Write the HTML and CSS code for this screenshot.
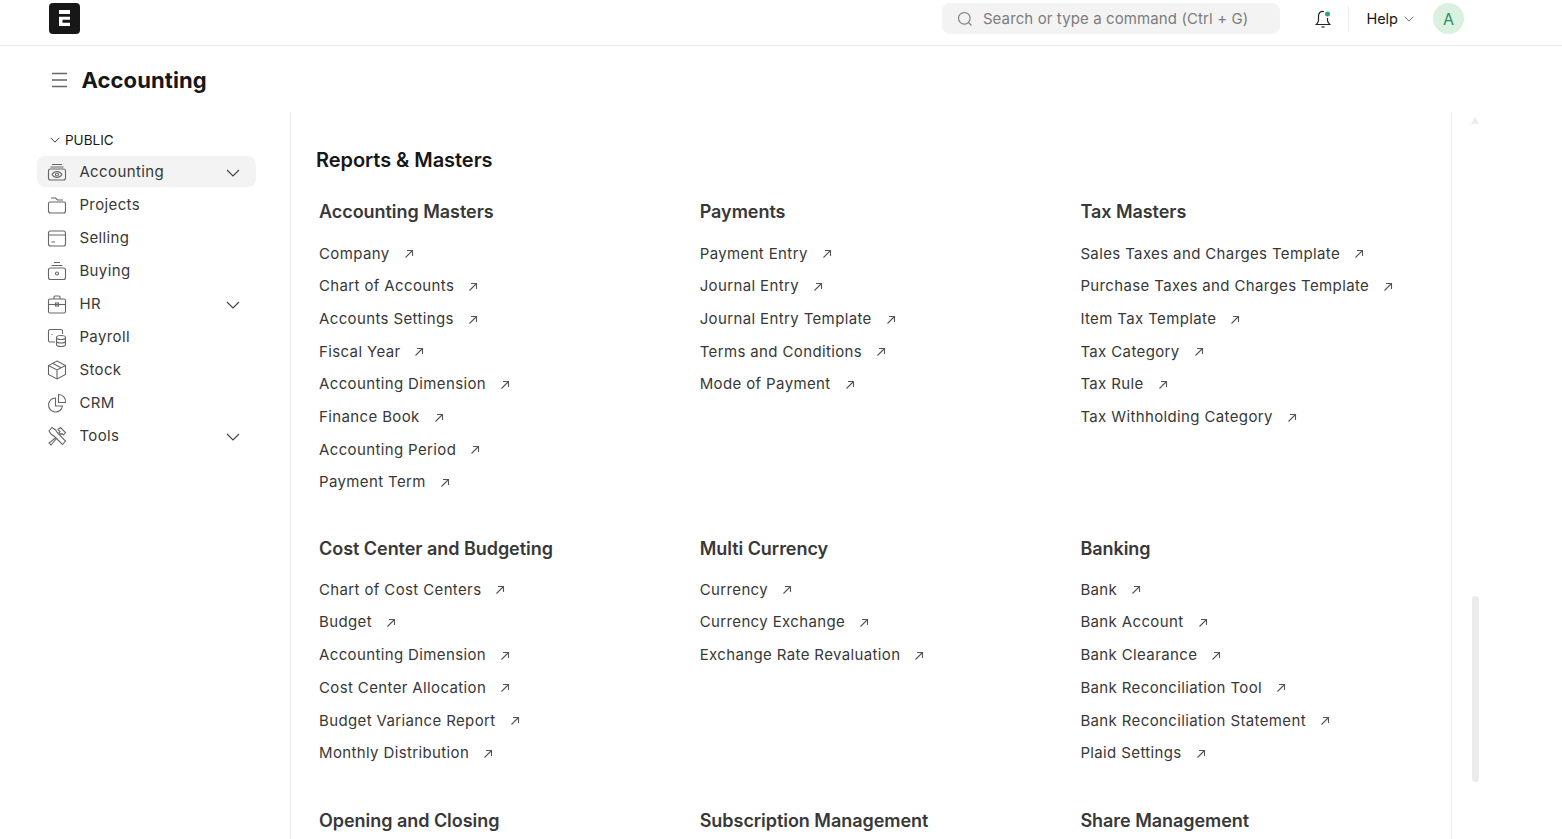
FILE: index.html
```html
<!DOCTYPE html>
<html lang="en">
<head>
  <meta charset="UTF-8" />
  <title>Accounting</title>
  <link rel="stylesheet" href="styles.css">
</head>
<body>
  <svg class="sprite" xmlns="http://www.w3.org/2000/svg" width="0" height="0">
    <symbol id="chev" viewBox="0 0 14 8"><path d="M1 1l6 6 6-6" fill="none" stroke="currentColor" stroke-width="1.2"/></symbol>
    <symbol id="arrow" viewBox="0 0 10 10"><path d="M1.5 8.5L8.5 1.5M3 1.5h5.5V7" fill="none" stroke="currentColor" stroke-width="1.1"/></symbol>
  </svg>

  <header class="navbar">
    <div class="logo">
      <svg width="31" height="31" viewBox="0 0 31 31" fill="#fff"><rect x="10" y="7" width="11" height="4"/><path d="M10 13.700h11v3h-7.500v3H21V23H10z"/></svg>
    </div>
    <div class="nav-right">
      <div class="search">
        <svg width="16" height="16" viewBox="0 0 16 16" fill="none" stroke="#7c7c7c" stroke-width="1.1"><circle cx="7.300" cy="7.300" r="5.800"/><path d="M11.500 11.500l3 3"/></svg>
        <span>Search or type a command (Ctrl + G)</span>
      </div>
      <div class="bell">
        <svg width="16" height="20" viewBox="0 0 16 20" fill="none" stroke="#222" stroke-width="1.2"><path d="M9 2.800C5.800 1.500 3.500 3.800 3.500 7v4.500c0 1.800-1.300 2.800-2.300 4h13.600c-1-1.200-2.300-2.200-2.300-4V9"/><path d="M6.500 18h3"/><circle cx="12.500" cy="5" r="2.500" fill="#30a66d" stroke="none"/></svg>
      </div>
      <div class="nav-sep"></div>
      <div class="help">Help <svg width="10" height="6"><use href="#chev"/></svg></div>
      <div class="avatar">A</div>
    </div>
  </header>

  <div class="page-head">
    <svg width="17" height="16" viewBox="0 0 17 16" stroke="#666" stroke-width="1.3"><path d="M1 1.500h15M1 8h15M1 14.500h15"/></svg>
    <h1>Accounting</h1>
  </div>

  <div class="layout">
    <aside class="sidebar">
      <div class="side-label"><svg width="10" height="6"><use href="#chev"/></svg> PUBLIC</div>
      <nav>
        <div class="side-item active">
          <svg class="side-icon" viewBox="0 0 20 20"><path d="M5 2.500h10M3.500 5h13"/><rect x="1.500" y="7" width="17" height="11" rx="2"/><path d="M5 12.500c1.500-2.300 3-3 5-3s3.500.7 5 3c-1.500 2.300-3 3-5 3s-3.500-.7-5-3z"/><circle cx="10" cy="12.500" r="1.500"/></svg>
          <span>Accounting</span>
          <svg class="side-chev"><use href="#chev"/></svg>
        </div>
        <div class="side-item">
          <svg class="side-icon" viewBox="0 0 20 20"><path d="M4 3h4.500l2 2H16M1.500 8.500A1.500 1.500 0 0 1 3 7h14a1.500 1.500 0 0 1 1.500 1.500V16a2 2 0 0 1-2 2h-13a2 2 0 0 1-2-2z"/></svg>
          <span>Projects</span>
        </div>
        <div class="side-item">
          <svg class="side-icon" viewBox="0 0 20 20"><rect x="1.500" y="3" width="17" height="15" rx="2"/><path d="M1.500 7h17M4.500 14h3.500"/></svg>
          <span>Selling</span>
        </div>
        <div class="side-item">
          <svg class="side-icon" viewBox="0 0 20 20"><path d="M7 1.500h6M4.500 4.500h11"/><rect x="1.500" y="7" width="17" height="11.500" rx="2"/><circle cx="10" cy="12.500" r="1.500"/></svg>
          <span>Buying</span>
        </div>
        <div class="side-item">
          <svg class="side-icon" viewBox="0 0 20 20"><path d="M7 5V3a1 1 0 0 1 1-1h4a1 1 0 0 1 1 1v2"/><rect x="1.500" y="5" width="17" height="14" rx="1.500"/><path d="M1.500 10.500h17"/><rect x="8.500" y="9" width="3" height="3"/></svg>
          <span>HR</span>
          <svg class="side-chev"><use href="#chev"/></svg>
        </div>
        <div class="side-item">
          <svg class="side-icon" viewBox="0 0 20 20"><path d="M8 15H3a1.500 1.500 0 0 1-1.500-1.500V4A1.500 1.500 0 0 1 3 2.500h11A1.500 1.500 0 0 1 15.500 4v3"/><path d="M5 7v1"/><ellipse cx="14" cy="10.500" rx="4.500" ry="2"/><path d="M9.500 10.500v7c0 1.100 2 2 4.500 2s4.500-.9 4.500-2v-7M9.500 14c0 1.100 2 2 4.500 2s4.500-.9 4.500-2"/></svg>
          <span>Payroll</span>
        </div>
        <div class="side-item">
          <svg class="side-icon" viewBox="0 0 20 20"><path d="M10 1l8.500 4.500v9L10 19l-8.500-4.500v-9z"/><path d="M1.500 5.500L10 10l8.500-4.500M10 10v9M5.500 3.200l8.500 4.500"/></svg>
          <span>Stock</span>
        </div>
        <div class="side-item">
          <svg class="side-icon" viewBox="0 0 20 20"><path d="M8.500 5a7 7 0 1 0 7 8h-7z"/><path d="M11.500 1.500a7 7 0 0 1 7 8h-7z"/></svg>
          <span>CRM</span>
        </div>
        <div class="side-item">
          <svg class="side-icon" viewBox="0 0 20 20"><path d="M2 5l3-3.500 3.500 2.500 2 3 8 8-3 3.500-8-8-3-2z"/><path d="M11 3.500l2.500-2 5 5-2 2.500-1.500-1.500-1 1-2-2 1-1zM9 11.500l-7 5.500 2 2 6-7"/></svg>
          <span>Tools</span>
          <svg class="side-chev"><use href="#chev"/></svg>
        </div>
      </nav>
    </aside>

    <main class="main">
      <h2>Reports &amp; Masters</h2>
      <div class="cards">
        <section class="card tall">
          <h3>Accounting Masters</h3>
          <a>Company <svg><use href="#arrow"/></svg></a>
          <a>Chart of Accounts <svg><use href="#arrow"/></svg></a>
          <a>Accounts Settings <svg><use href="#arrow"/></svg></a>
          <a>Fiscal Year <svg><use href="#arrow"/></svg></a>
          <a>Accounting Dimension <svg><use href="#arrow"/></svg></a>
          <a>Finance Book <svg><use href="#arrow"/></svg></a>
          <a>Accounting Period <svg><use href="#arrow"/></svg></a>
          <a>Payment Term <svg><use href="#arrow"/></svg></a>
        </section>
        <section class="card tall">
          <h3>Payments</h3>
          <a>Payment Entry <svg><use href="#arrow"/></svg></a>
          <a>Journal Entry <svg><use href="#arrow"/></svg></a>
          <a>Journal Entry Template <svg><use href="#arrow"/></svg></a>
          <a>Terms and Conditions <svg><use href="#arrow"/></svg></a>
          <a>Mode of Payment <svg><use href="#arrow"/></svg></a>
        </section>
        <section class="card tall">
          <h3>Tax Masters</h3>
          <a>Sales Taxes and Charges Template <svg><use href="#arrow"/></svg></a>
          <a>Purchase Taxes and Charges Template <svg><use href="#arrow"/></svg></a>
          <a>Item Tax Template <svg><use href="#arrow"/></svg></a>
          <a>Tax Category <svg><use href="#arrow"/></svg></a>
          <a>Tax Rule <svg><use href="#arrow"/></svg></a>
          <a>Tax Withholding Category <svg><use href="#arrow"/></svg></a>
        </section>
        <section class="card">
          <h3>Cost Center and Budgeting</h3>
          <a>Chart of Cost Centers <svg><use href="#arrow"/></svg></a>
          <a>Budget <svg><use href="#arrow"/></svg></a>
          <a>Accounting Dimension <svg><use href="#arrow"/></svg></a>
          <a>Cost Center Allocation <svg><use href="#arrow"/></svg></a>
          <a>Budget Variance Report <svg><use href="#arrow"/></svg></a>
          <a>Monthly Distribution <svg><use href="#arrow"/></svg></a>
        </section>
        <section class="card">
          <h3>Multi Currency</h3>
          <a>Currency <svg><use href="#arrow"/></svg></a>
          <a>Currency Exchange <svg><use href="#arrow"/></svg></a>
          <a>Exchange Rate Revaluation <svg><use href="#arrow"/></svg></a>
        </section>
        <section class="card">
          <h3>Banking</h3>
          <a>Bank <svg><use href="#arrow"/></svg></a>
          <a>Bank Account <svg><use href="#arrow"/></svg></a>
          <a>Bank Clearance <svg><use href="#arrow"/></svg></a>
          <a>Bank Reconciliation Tool <svg><use href="#arrow"/></svg></a>
          <a>Bank Reconciliation Statement <svg><use href="#arrow"/></svg></a>
          <a>Plaid Settings <svg><use href="#arrow"/></svg></a>
        </section>
        <section class="card"><h3>Opening and Closing</h3></section>
        <section class="card"><h3>Subscription Management</h3></section>
        <section class="card"><h3>Share Management</h3></section>
      </div>
    </main>

    <div class="scroll">
      <div class="scroll-up"></div>
      <div class="scroll-thumb"></div>
    </div>
  </div>
</body>
</html>
```

FILE: styles.css
```css
* {
  margin: 0;
  padding: 0;
  box-sizing: border-box;
}
html, body {
  height: 100%;
  overflow: hidden;
}
body {
  background-color: #ffffff;
  color: #383838;
  font-family: Inter, 'Noto Sans', sans-serif;
  font-size: 15px;
}
.sprite {
  position: absolute;
}

.navbar {
  height: 46px;
  display: flex;
  align-items: flex-start;
  justify-content: space-between;
  padding: 3px 98px 0 49px;
  border-bottom: 1px solid #ededed;
}
.logo {
  width: 31px;
  height: 31px;
  background-color: #171717;
  border-radius: 4px;
  display: flex;
}
.nav-right {
  display: flex;
  align-items: center;
}
.search {
  width: 338px;
  height: 31px;
  background-color: #f3f3f3;
  border-radius: 8px;
  display: flex;
  align-items: center;
  gap: 9.5px;
  padding-left: 15px;
  color: #7c7c7c;
  font-size: 15px;
  letter-spacing: 0.11px;
}
.bell {
  margin-left: 35px;
  display: flex;
}
.nav-sep {
  width: 1px;
  height: 26px;
  background-color: #ededed;
  margin: 0 17px 0 17px;
}
.help {
  color: #171717;
  font-size: 14.5px;
  display: flex;
  align-items: center;
  gap: 6px;
}
.help svg {
  color: #555;
}
.avatar {
  width: 31px;
  height: 31px;
  border-radius: 50%;
  background-color: #daf0e1;
  color: #278f5e;
  margin-left: 19px;
  display: flex;
  align-items: center;
  justify-content: center;
  font-size: 16px;
}

.page-head {
  height: 66px;
  display: flex;
  align-items: center;
  gap: 13.5px;
  padding-left: 51px;
  padding-top: 2px;
}
.page-head h1 {
  font-size: 22px;
  font-weight: 700;
  color: #171717;
  letter-spacing: 0.1px;
}

.layout {
  display: flex;
  align-items: flex-start;
}
.sidebar {
  width: 291px;
  height: 727px;
  flex-shrink: 0;
  border-right: 1px solid #ededed;
  padding: 19px 34px 0 37px;
}
.side-label {
  display: flex;
  align-items: center;
  gap: 5px;
  height: 18px;
  margin-left: 13px;
  margin-bottom: 7px;
  font-size: 13.5px;
  color: #171717;
}
.side-item {
  height: 31px;
  margin-bottom: 2px;
  display: flex;
  align-items: center;
  gap: 12.4px;
  padding-left: 10px;
  border-radius: 8px;
  letter-spacing: 0.38px;
  color: #383838;
}
.side-item.active {
  background-color: #f3f3f3;
}
.side-icon {
  width: 20px;
  height: 20px;
  fill: none;
  stroke: #666;
  stroke-width: 1.1;
}
.side-chev {
  width: 14px;
  height: 8px;
  margin-left: auto;
  margin-right: 16px;
  margin-top: 3px;
  color: #444;
}

.main {
  width: 1161px;
  height: 727px;
  flex-shrink: 0;
  overflow: hidden;
  border-right: 1px solid #ededed;
  padding: 36px 0 0 25px;
}
.main h2 {
  font-size: 20px;
  font-weight: 600;
  color: #171717;
  line-height: 24px;
  letter-spacing: -0.05px;
  margin-bottom: 28px;
}
.cards {
  display: grid;
  grid-template-columns: repeat(3, 380.7px);
  padding-left: 3px;
}
.card {
  padding-bottom: 39.55px;
}
.card.tall {
  padding-bottom: 38.9px;
}
.card h3 {
  font-size: 18px;
  font-weight: 600;
  color: #383838;
  line-height: 24px;
  letter-spacing: -0.04px;
  margin-bottom: 11.75px;
}
.card.tall h3 {
  margin-bottom: 12.8px;
}
.card a {
  display: flex;
  align-items: center;
  height: 32.7px;
  letter-spacing: 0.37px;
  white-space: nowrap;
}
.card a svg {
  width: 10px;
  height: 10px;
  margin-left: 14px;
  margin-top: 2px;
  color: #555;
}

.scroll {
  width: 8px;
  height: 727px;
  margin-left: 20px;
  flex-shrink: 0;
  position: relative;
}
.scroll-up {
  width: 0;
  height: 0;
  border-left: 4.5px solid transparent;
  border-right: 4.5px solid transparent;
  border-bottom: 7px solid #ebebeb;
  margin: 5px 0 0 -1px;
}
.scroll-thumb {
  position: absolute;
  top: 484px;
  left: 0;
  width: 7px;
  height: 186px;
  background-color: #ebebeb;
  border-radius: 4px;
}
```
